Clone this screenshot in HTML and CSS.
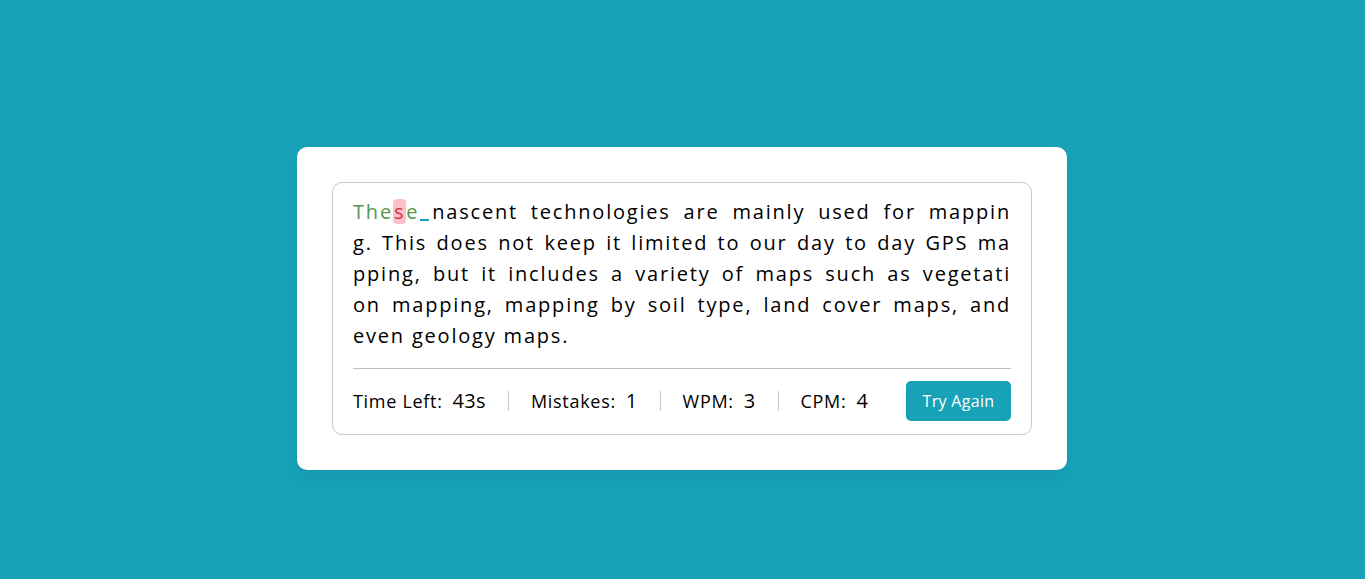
FILE: index.html
```html
<!DOCTYPE html>
<html lang="en">
<head>
<meta charset="utf-8">
<title>Typing Speed Test</title>
<link rel="stylesheet" href="styles.css">
</head>
<body>
  <main class="wrapper">
    <div class="content-box">
      <div class="typing-text">
        <p class="para">
          <span class="line"><span class="correct">The</span><span class="incorrect">s</span><span class="correct">e</span><span class="active"> </span>nascent technologies are mainly used for mappin</span>
          <span class="line">g. This does not keep it limited to our day to day GPS ma</span>
          <span class="line">pping, but it includes a variety of maps such as vegetati</span>
          <span class="line">on mapping, mapping by soil type, land cover maps, and</span>
          <span class="line last">even geology maps.</span>
        </p>
      </div>
      <div class="content">
        <ul class="result-details">
          <li class="time"><p>Time Left:</p><span><b>43</b>s</span></li>
          <li class="mistake"><p>Mistakes:</p><span>1</span></li>
          <li class="wpm"><p>WPM:</p><span>3</span></li>
          <li class="cpm"><p>CPM:</p><span>4</span></li>
        </ul>
        <button class="btn">Try Again</button>
      </div>
    </div>
  </main>
</body>
</html>
```
FILE: styles.css
```css
* {
  margin: 0;
  padding: 0;
  box-sizing: border-box;
}

body {
  background: #17a2b8;
  font-family: "Open Sans", "Noto Sans", sans-serif;
  color: #000;
  min-height: 100vh;
  padding: 147px 1px 0 0;
  display: flex;
  justify-content: center;
  align-items: flex-start;
}

.wrapper {
  width: 770px;
  padding: 35px;
  background: #fff;
  border-radius: 10px;
  box-shadow: 0 10px 15px rgba(0, 0, 0, 0.05);
}

.content-box {
  border: 1px solid #c8c8c8;
  border-radius: 10px;
  padding: 13px 20px 13px 20px;
}

.typing-text {
  border-bottom: 1px solid #bfbfbf;
  padding-bottom: 17px;
}

.para {
  font-size: 20px;
  line-height: 31px;
  letter-spacing: 1.8px;
  color: #000;
}

.line {
  display: block;
  height: 31px;
  text-align: justify;
  text-align-last: justify;
  white-space: nowrap;
}

.line.last {
  text-align: left;
  text-align-last: left;
}

.correct {
  color: #56964f;
}

.incorrect {
  display: inline-block;
  line-height: 22px;
  padding: 2px 1px 1px;
  color: #cb3439;
  background: #ffc0cb;
  border-radius: 4px;
}

.active {
  position: relative;
}

.active::before {
  content: "";
  position: absolute;
  left: 1px;
  width: 9px;
  bottom: 4px;
  height: 2px;
  background: #17a2b8;
}

.content {
  display: flex;
  align-items: center;
  justify-content: space-between;
  padding-top: 12px;
  height: 52px;
}

.result-details {
  list-style: none;
  display: flex;
  align-items: center;
}

.result-details li {
  display: flex;
  align-items: center;
  height: 20px;
  padding: 0 22px;
  border-left: 1px solid #c8c8c8;
  line-height: 20px;
}

.result-details li:first-child {
  padding-left: 0;
  border-left: 0;
}

.result-details li p {
  font-size: 18px;
  letter-spacing: 0.7px;
  color: #000;
}

.result-details li span {
  display: block;
  margin-left: 10px;
  font-size: 20px;
  letter-spacing: 0.3px;
  font-weight: 500;
  color: #000;
}

.result-details li span b {
  font-weight: 500;
}

.btn {
  width: 105px;
  height: 40px;
  border: none;
  border-radius: 5px;
  background: #17a2b8;
  color: #fff;
  font-family: "Open Sans", "Noto Sans", sans-serif;
  font-size: 16px;
  letter-spacing: 0.3px;
  cursor: pointer;
}
```
